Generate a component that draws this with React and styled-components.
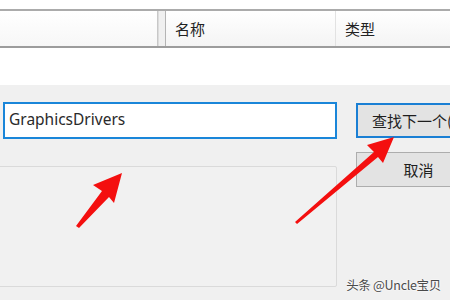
import React from 'react';
import styled, { createGlobalStyle } from 'styled-components';

const GlobalStyle = createGlobalStyle`
  html, body {
    margin: 0;
    padding: 0;
    background: #ffffff;
  }
  body {
    font-family: "Noto Sans", "Noto Sans CJK SC", sans-serif;
  }
`;

const Page = styled.div`
  position: relative;
  width: 450px;
  height: 300px;
  overflow: hidden;
  background: #ffffff;
  display: flex;
  flex-direction: column;
`;

const TopGap = styled.div`
  height: 9px;
  background: #ffffff;
`;

const HeaderBar = styled.div`
  display: flex;
  height: 35px;
  border-top: 2px solid #ababab;
  border-bottom: 2px solid #9c9c9c;
  background: linear-gradient(#ffffff, #f4f4f4);
`;

const TreeHead = styled.div`
  width: 157px;
  border-right: 1px solid #c8c8c8;
  background: linear-gradient(#ffffff, #f7f7f7);
`;

const Splitter = styled.div`
  width: 6px;
  background: #f0f0f0;
  border-right: 1px solid #b4b4b4;
  border-left: 1px solid #dcdcdc;
`;

const HeadCol = styled.div`
  width: ${p => p.$w || 'auto'};
  flex: ${p => (p.$w ? 'none' : 1)};
  display: flex;
  align-items: center;
  padding-left: 9px;
  box-sizing: border-box;
  border-right: ${p => (p.$w ? '1px solid #e2e2e2' : 'none')};
  font-family: "Noto Sans CJK SC", sans-serif;
  font-size: 15px;
  color: #222;
`;

const WhiteGap = styled.div`
  height: 37px;
  background: #ffffff;
`;

const Dialog = styled.div`
  flex: 1;
  background: #f0f0f0;
  padding-top: 17px;
  display: flex;
  gap: 19px;
`;

const LeftCol = styled.div`
  flex: none;
  width: 337px;
  display: flex;
  flex-direction: column;
`;

const SearchInput = styled.div`
  margin-left: 3px;
  height: 37px;
  box-sizing: border-box;
  border: 2px solid #1a86d9;
  background: #ffffff;
  display: flex;
  align-items: center;
  padding: 0 0 3px 4px;
  font-family: "Noto Sans", sans-serif;
  font-size: 15.5px;
  color: #2a2a2a;
`;

const GroupBox = styled.div`
  margin-top: 27px;
  margin-left: -2px;
  height: 121px;
  box-sizing: border-box;
  border: 1px solid #dadada;
  border-radius: 2px;
  background: #f1f1f1;
`;

const RightCol = styled.div`
  flex: none;
  display: flex;
  flex-direction: column;
  gap: 14px;
  padding-top: 1px;
`;

const DlgButton = styled.div`
  width: 130px;
  height: 35px;
  box-sizing: border-box;
  border: ${p => (p.$primary ? '2px solid #1a7fd4' : '1px solid #adadad')};
  background: #e3e3e3;
  display: flex;
  align-items: center;
  justify-content: ${p => (p.$primary ? 'flex-start' : 'center')};
  padding-left: ${p => (p.$primary ? '14px' : '0')};
  padding-right: ${p => (p.$primary ? '0' : '5px')};
  font-family: "Noto Sans CJK SC", sans-serif;
  font-size: 15px;
  color: #1e1e1e;
  white-space: nowrap;
  overflow: hidden;
`;

const Overlay = styled.svg`
  position: absolute;
  left: 0;
  top: 0;
  width: 450px;
  height: 300px;
  pointer-events: none;
`;

const Watermark = styled.div`
  position: absolute;
  right: 9px;
  bottom: 6px;
  font-family: "Noto Sans CJK SC", sans-serif;
  font-size: 12.5px;
  letter-spacing: -0.3px;
  color: #4a4a4a;
  text-shadow: 0 0 2px #ffffff, 0 0 2px #ffffff;
`;

export default function App() {
  return (
    <Page>
      <GlobalStyle />
      <TopGap />
      <HeaderBar>
        <TreeHead />
        <Splitter />
        <HeadCol $w="170px">名称</HeadCol>
        <HeadCol>类型</HeadCol>
      </HeaderBar>
      <WhiteGap />
      <Dialog>
        <LeftCol>
          <SearchInput>GraphicsDrivers</SearchInput>
          <GroupBox />
        </LeftCol>
        <RightCol>
          <DlgButton $primary>查找下一个(F)</DlgButton>
          <DlgButton>取消</DlgButton>
        </RightCol>
      </Dialog>
      <Overlay viewBox="0 0 450 300">
        <polygon
          fill="#f40f0f"
          points="76,226 102,191 93,185 122,173 114,203 109,197 79,228"
        />
        <polygon
          fill="#f40f0f"
          points="295,222 374,152 367,145 394,137 383,163 378,157 297,224"
        />
      </Overlay>
      <Watermark>头条 @Uncle宝贝</Watermark>
    </Page>
  );
}
